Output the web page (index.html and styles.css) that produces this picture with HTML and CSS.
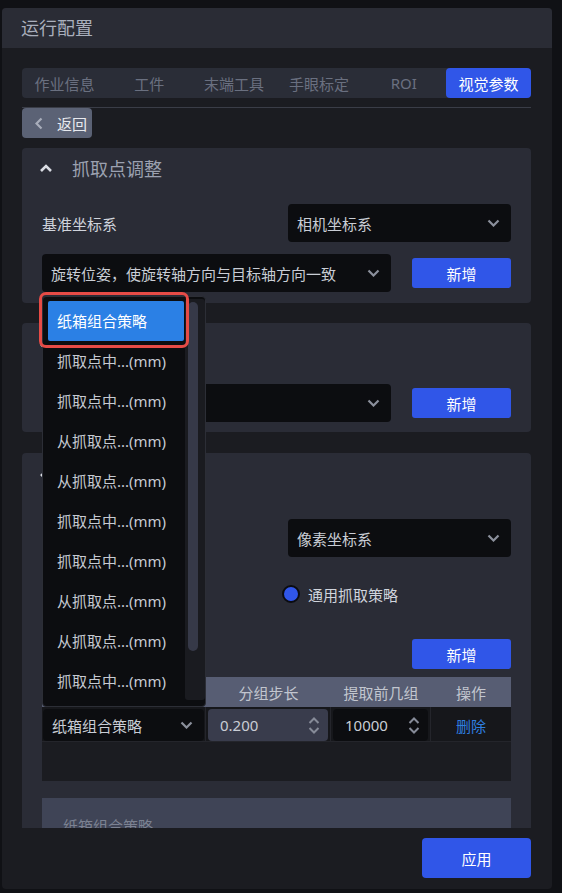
FILE: index.html
```html
<!DOCTYPE html>
<html lang="zh-CN">
<head>
    <meta charset="UTF-8">
    <meta name="viewport" content="width=device-width, initial-scale=1.0">
    <title>运行配置</title>
    <link rel="stylesheet" href="styles.css">
</head>
<body>
    <div class="dialog">
        <div class="dialog-header">运行配置</div>

        <div class="dialog-body">
            <div class="tabs">
                <div class="tab">作业信息</div>
                <div class="tab">工件</div>
                <div class="tab">末端工具</div>
                <div class="tab">手眼标定</div>
                <div class="tab">ROI</div>
                <div class="tab active">视觉参数</div>
            </div>
            <div class="tab-line"></div>

            <button class="back-btn">
                <svg width="8" height="13" viewBox="0 0 8 13"><polyline points="6.5,1.5 1.5,6.5 6.5,11.5" fill="none" stroke="#a9aebb" stroke-width="2.2"/></svg>
                返回
            </button>

            <!-- 抓取点调整 -->
            <div class="panel">
                <div class="panel-head">
                    <svg class="fold" width="12" height="8" viewBox="0 0 12 8"><polyline points="1,7 6,2 11,7" fill="none" stroke="#d9dce3" stroke-width="2.6"/></svg>
                    <span>抓取点调整</span>
                </div>
                <div class="panel-body">
                    <div class="form-row">
                        <span class="label">基准坐标系</span>
                        <div class="select half">相机坐标系<svg class="caret" width="13" height="8" viewBox="0 0 13 8"><polyline points="1.5,1.5 6.5,6.5 11.5,1.5" fill="none" stroke="#8b909c" stroke-width="2.2"/></svg></div>
                    </div>
                    <div class="form-row gap-12">
                        <div class="select wide">旋转位姿，使旋转轴方向与目标轴方向一致<svg class="caret" width="13" height="8" viewBox="0 0 13 8"><polyline points="1.5,1.5 6.5,6.5 11.5,1.5" fill="none" stroke="#8b909c" stroke-width="2.2"/></svg></div>
                        <button class="btn">新增</button>
                    </div>
                </div>
            </div>

            <!-- second group, header covered by the open menu -->
            <div class="panel p2">
                <div class="panel-head">
                    <svg class="fold" width="12" height="8" viewBox="0 0 12 8"><polyline points="1,7 6,2 11,7" fill="none" stroke="#d9dce3" stroke-width="2.6"/></svg>
                </div>
                <div class="panel-body">
                    <div class="form-row">
                        <div class="select wide"><span></span><svg class="caret" width="13" height="8" viewBox="0 0 13 8"><polyline points="1.5,1.5 6.5,6.5 11.5,1.5" fill="none" stroke="#8b909c" stroke-width="2.2"/></svg></div>
                        <button class="btn">新增</button>
                    </div>
                </div>
            </div>

            <!-- third group -->
            <div class="panel p3">
                <div class="panel-head">
                    <svg class="fold" width="12" height="8" viewBox="0 0 12 8"><polyline points="1,7 6,2 11,7" fill="none" stroke="#d9dce3" stroke-width="2.6"/></svg>
                </div>
                <div class="panel-body">
                    <div class="form-row">
                        <span class="label"></span>
                        <div class="select half">像素坐标系<svg class="caret" width="13" height="8" viewBox="0 0 13 8"><polyline points="1.5,1.5 6.5,6.5 11.5,1.5" fill="none" stroke="#8b909c" stroke-width="2.2"/></svg></div>
                    </div>
                    <div class="form-row radio-row">
                        <span class="label"></span>
                        <div class="radio-group">
                            <span class="radio"></span>
                            <span class="label">通用抓取策略</span>
                        </div>
                    </div>
                    <div class="btn-row">
                        <button class="btn">新增</button>
                    </div>

                    <div class="grid-table">
                        <div class="thead">
                            <div class="th"></div>
                            <div class="th">分组步长</div>
                            <div class="th">提取前几组</div>
                            <div class="th">操作</div>
                        </div>
                        <div class="trow">
                            <div class="td first">
                                <div class="select small">纸箱组合策略<svg class="caret" width="13" height="8" viewBox="0 0 13 8"><polyline points="1.5,1.5 6.5,6.5 11.5,1.5" fill="none" stroke="#8b909c" stroke-width="2.2"/></svg></div>
                            </div>
                            <div class="td">
                                <div class="num-input light">0.200<svg width="12" height="17" viewBox="0 0 12 17"><polyline points="1.5,6 6,1.5 10.5,6" fill="none" stroke="#868b98" stroke-width="2"/><polyline points="1.5,11 6,15.5 10.5,11" fill="none" stroke="#868b98" stroke-width="2"/></svg></div>
                            </div>
                            <div class="td">
                                <div class="num-input">10000<svg width="12" height="17" viewBox="0 0 12 17"><polyline points="1.5,6 6,1.5 10.5,6" fill="none" stroke="#868b98" stroke-width="2"/><polyline points="1.5,11 6,15.5 10.5,11" fill="none" stroke="#868b98" stroke-width="2"/></svg></div>
                            </div>
                            <div class="td action"><span class="link">删除</span></div>
                        </div>
                        <div class="tbody-empty"></div>
                    </div>

                    <div class="note">纸箱组合策略</div>
                </div>
            </div>

            <!-- open select menu -->
            <div class="dropdown">
                <div class="options">
                    <div class="option selected">纸箱组合策略</div>
                    <div class="option">抓取点中...(mm)</div>
                    <div class="option">抓取点中...(mm)</div>
                    <div class="option">从抓取点...(mm)</div>
                    <div class="option">从抓取点...(mm)</div>
                    <div class="option">抓取点中...(mm)</div>
                    <div class="option">抓取点中...(mm)</div>
                    <div class="option">从抓取点...(mm)</div>
                    <div class="option">从抓取点...(mm)</div>
                    <div class="option">抓取点中...(mm)</div>
                </div>
                <div class="scroll-track"><div class="scroll-thumb"></div></div>
            </div>
            <div class="focus-ring"></div>
        </div>

        <div class="dialog-footer">
            <button class="btn apply">应用</button>
        </div>
    </div>
</body>
</html>
```

FILE: styles.css
```css
/* General */
body {
    margin: 0;
    padding: 8px 0 0 2px;
    background-color: #101115;
    font-family: "Noto Sans", "Noto Sans CJK SC", sans-serif;
    font-size: 15px;
}

button {
    font: inherit;
    border: none;
    cursor: pointer;
}

/* Dialog */
.dialog {
    width: 550px;
    height: 881px;
    display: flex;
    flex-direction: column;
    background-color: #1b1c21;
    border-radius: 4px;
    overflow: hidden;
}

.dialog-header {
    flex: none;
    height: 40px;
    line-height: 40px;
    padding-left: 19px;
    background-color: #2a2c35;
    color: #a9afbc;
    font-size: 18px;
}

.dialog-body {
    flex: 1;
    min-height: 0;
    position: relative;
    overflow: hidden;
    padding: 20px 21px 0 20px;
}

.dialog-footer {
    flex: none;
    height: 61px;
    box-sizing: border-box;
    display: flex;
    justify-content: flex-end;
    padding: 10px 21px 0 0;
}

/* Tabs */
.tabs {
    display: grid;
    grid-template-columns: repeat(6, 1fr);
    height: 30px;
    background-color: #2a2d37;
    border-radius: 4px;
}

.tab {
    display: flex;
    align-items: center;
    justify-content: center;
    color: #6a7080;
    border-radius: 4px;
}

.tab.active {
    background-color: #3056e8;
    color: #fff;
}

.tab-line {
    height: 1px;
    margin-top: 9px;
    background-color: #3a3d47;
}

.back-btn {
    display: flex;
    align-items: center;
    width: 70px;
    height: 30px;
    padding: 0 0 0 13px;
    margin-bottom: 10px;
    background-color: #5b6275;
    color: #e8eaef;
    border-radius: 4px;
}

.back-btn svg { margin-right: 14px; }

/* Panels */
.panel {
    background-color: #2a2c36;
    border-radius: 4px;
    margin-bottom: 20px;
}

.panel.p2 { margin-bottom: 21px; }

.panel-head {
    display: flex;
    align-items: center;
    height: 40px;
    padding-left: 18px;
    color: #9ba1b0;
    font-size: 18px;
}

.panel-head .fold { margin-right: 20px; }

.panel-body { padding: 16px 20px 11px; }
.p2 .panel-body { padding: 21px 20px 10px; }
.p3 .panel-body { padding: 26px 20px 0; }

.form-row {
    display: flex;
    align-items: center;
    justify-content: space-between;
}

.gap-12 { margin-top: 12px; }

.label { color: #d0d4dc; }

/* Inputs */
.select {
    display: flex;
    align-items: center;
    justify-content: space-between;
    height: 38px;
    box-sizing: border-box;
    padding: 0 11px 0 9px;
    background-color: #0c0d10;
    border-radius: 4px;
    color: #c9cdd5;
    white-space: nowrap;
}

.select.half { width: 223px; }
.select.wide { width: 349px; }
.select.small { height: 32px; }

.btn {
    width: 99px;
    height: 30px;
    background-color: #3056e8;
    color: #fff;
    border-radius: 3px;
}

.btn.apply {
    width: 109px;
    height: 40px;
    border-radius: 4px;
}

.radio-row {
    height: 38px;
    margin-top: 18px;
}

.radio-group {
    display: flex;
    align-items: center;
    gap: 8px;
    width: 229px;
}

.radio {
    width: 18px;
    height: 18px;
    box-sizing: border-box;
    border: 2px solid #0b0c10;
    border-radius: 50%;
    background-color: #3056e8;
}

.btn-row {
    display: flex;
    justify-content: flex-end;
    margin-top: 26px;
}

/* Table */
.grid-table {
    margin-top: 8px;
    background-color: #1b1c21;
}

.thead, .trow {
    display: grid;
    grid-template-columns: 164px 125px 100px 80px;
}

.thead {
    height: 30px;
    background-color: #575d73;
    color: #c2c6cf;
}

.th {
    display: flex;
    align-items: center;
    justify-content: center;
}

.trow {
    height: 35px;
    box-sizing: border-box;
    background-color: #16171b;
    border-bottom: 1px solid #24252b;
}

.td {
    padding: 2px 2px 0;
    border-right: 1px solid #24252b;
    box-sizing: border-box;
}

.td.first { padding: 2px 1px 0 1px; }

.td.action {
    display: flex;
    align-items: center;
    justify-content: center;
    border-right: none;
}

.link { color: #2f7fe0; }

.num-input {
    display: flex;
    align-items: center;
    justify-content: space-between;
    height: 32px;
    box-sizing: border-box;
    padding: 0 8px 0 12px;
    background-color: #0c0d10;
    border-radius: 4px;
    color: #c9cdd5;
}

.num-input.light { background-color: #393c4c; }

.tbody-empty { height: 39px; }

.note {
    margin-top: 17px;
    height: 100px;
    padding: 17px 21px;
    background-color: #3f4456;
    color: #7c8292;
}

/* Open select menu */
.dropdown {
    position: absolute;
    left: 40px;
    top: 248px;
    width: 164px;
    height: 411px;
    box-sizing: border-box;
    display: flex;
    padding: 4px 0 5px 5px;
    background-color: #0c0d10;
    border: 1px solid #2c2e36;
    border-radius: 4px;
}

.options { width: 136px; }

.option {
    height: 40px;
    line-height: 40px;
    padding-left: 9px;
    color: #c6cad2;
    white-space: nowrap;
    border-radius: 2px;
}

.option.selected {
    background-color: #2b80e5;
    color: #fff;
}

.scroll-track {
    width: 20px;
    box-sizing: border-box;
    margin: -2px 0 1px 1px;
    padding: 3px 7px 0 3px;
    background-color: #1a1b20;
    border-radius: 3px;
}

.scroll-thumb {
    height: 349px;
    background-color: #363948;
    border-radius: 5px;
}

.focus-ring {
    position: absolute;
    left: 37px;
    top: 244px;
    width: 150px;
    height: 56px;
    box-sizing: border-box;
    border: 3px solid #e64b46;
    border-radius: 7px;
    pointer-events: none;
}
```
